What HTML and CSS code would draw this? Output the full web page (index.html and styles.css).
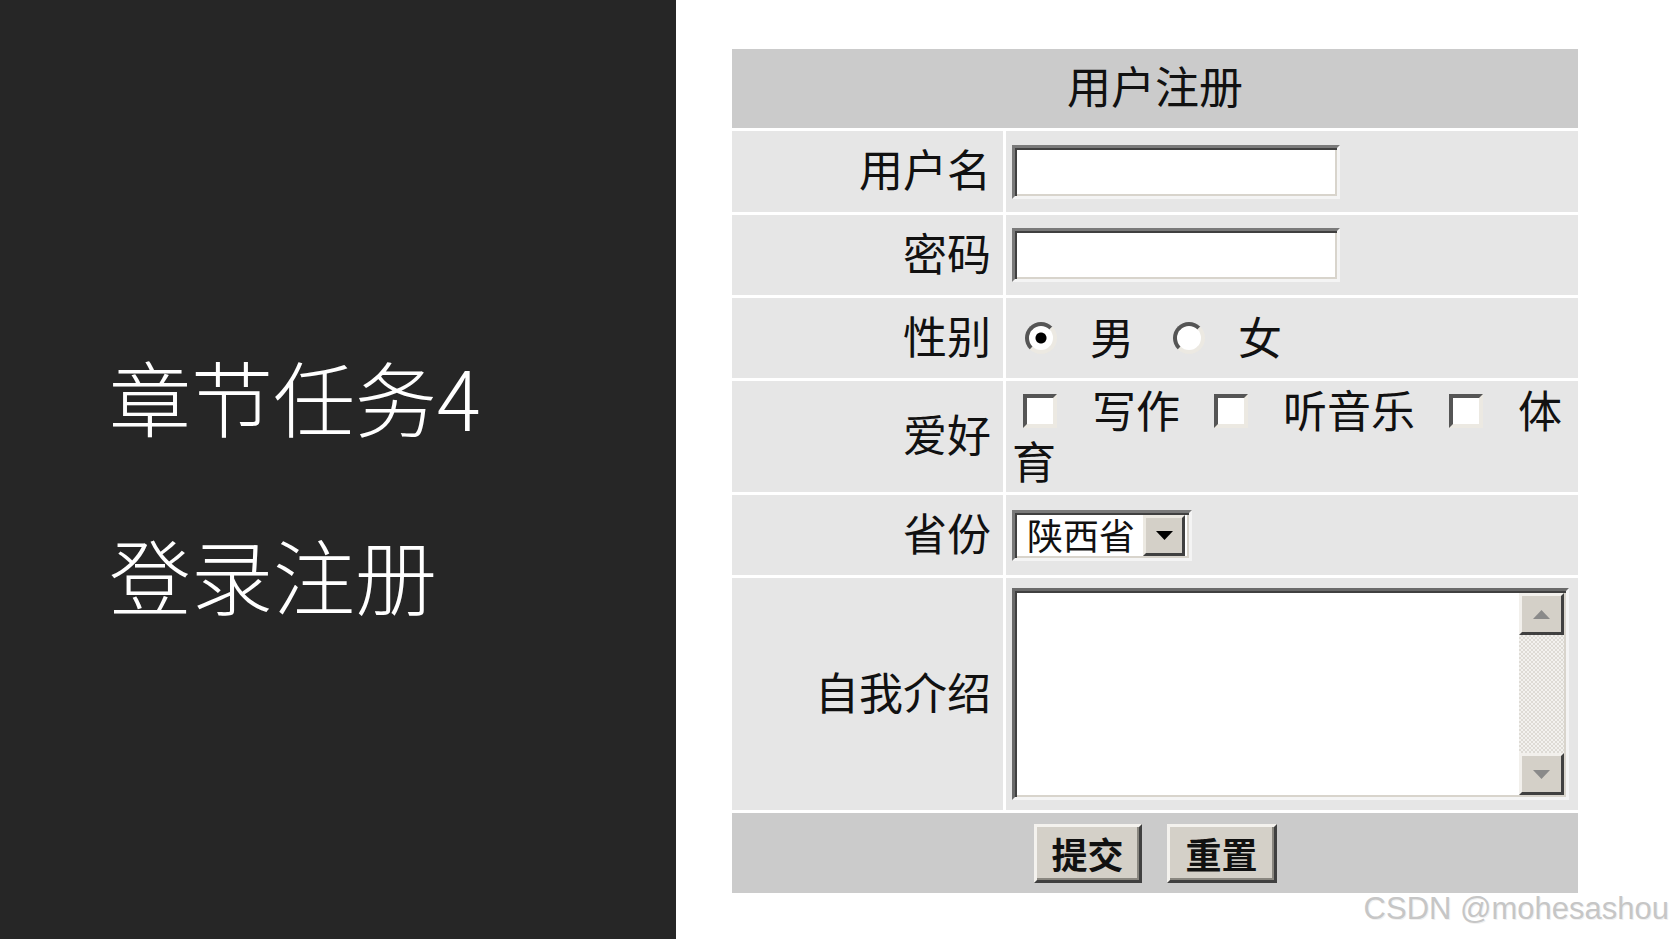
FILE: index.html
```html
<!DOCTYPE html>
<html lang="zh-CN">
<head>
  <meta charset="UTF-8">
  <title>章节任务4 登录注册</title>
  <link rel="stylesheet" href="styles.css">
</head>
<body>

<div class="slide">
  <div class="side">
    <h1>章节任务4</h1>
    <h1>登录注册</h1>
  </div>

  <div class="main">
    <form class="reg">
      <div class="head">用户注册</div>

      <label class="lbl" for="user">用户名</label>
      <div class="cell"><input type="text" id="user" class="text"></div>

      <label class="lbl" for="pwd">密码</label>
      <div class="cell"><input type="password" id="pwd" class="text"></div>

      <div class="lbl">性别</div>
      <div class="cell sex">
        <input type="radio" name="sex" class="radio" checked>
        <span class="opt">男</span>
        <input type="radio" name="sex" class="radio">
        <span class="opt">女</span>
      </div>

      <div class="lbl">爱好</div>
      <div class="cell">
        <div class="hobby"><input type="checkbox" class="check first">写作<input type="checkbox" class="check">听音乐<input type="checkbox" class="check">体育</div>
      </div>

      <div class="lbl">省份</div>
      <div class="cell">
        <div class="select">
          <span class="select-text">陕西省</span>
          <span class="select-btn">
            <svg width="17" height="9" viewBox="0 0 17 9"><path d="M0 0h17L8.5 9z" fill="#000"/></svg>
          </span>
        </div>
      </div>

      <label class="lbl" for="intro">自我介绍</label>
      <div class="cell">
        <div class="memo">
          <textarea id="intro"></textarea>
          <div class="scroll">
            <span class="scroll-btn">
              <svg width="17" height="9" viewBox="0 0 17 9"><path d="M8.5 0L17 9H0z" fill="#8a8a8a"/></svg>
            </span>
            <span class="scroll-track"></span>
            <span class="scroll-btn">
              <svg width="17" height="9" viewBox="0 0 17 9"><path d="M0 0h17L8.5 9z" fill="#8a8a8a"/></svg>
            </span>
          </div>
        </div>
      </div>

      <div class="foot">
        <button type="submit" class="btn">提交</button>
        <button type="reset" class="btn">重置</button>
      </div>
    </form>

    <div class="mark">CSDN @mohesashou</div>
  </div>
</div>

</body>
</html>
```

FILE: styles.css
```css
body {
  margin: 0;
  font-family: "Noto Sans CJK SC", sans-serif;
  color: #111;
}

.slide {
  display: flex;
  width: 1675px;
  height: 939px;
}

.side {
  width: 676px;
  box-sizing: border-box;
  padding: 355px 0 0 109px;
  background-color: #262626;
  color: #fff;
  display: flex;
  flex-direction: column;
  gap: 96px;
}

.side h1 {
  margin: 0;
  font-size: 82px;
  font-weight: 300;
  line-height: 82px;
}

.main {
  flex: 1;
  position: relative;
  background-color: #fff;
  padding: 49px 0 0 56px;
}

.reg {
  display: grid;
  grid-template-columns: 271px 572px;
  grid-template-rows: 79px 81px 80px 80px 111px 80px 232px 80px;
  gap: 3px;
  width: 846px;
  font-size: 44px;
  line-height: 51px;
}

.head, .foot {
  grid-column: 1 / 3;
  background-color: #cbcbcb;
  display: flex;
  align-items: center;
  justify-content: center;
}

.head {
  padding-bottom: 7px;
}

.foot {
  gap: 25px;
}

.lbl {
  background-color: #e6e6e6;
  display: flex;
  align-items: center;
  justify-content: flex-end;
  padding: 0 12px 6px 0;
}

.cell {
  background-color: #e6e6e6;
  display: flex;
  align-items: center;
  padding: 0 6px;
}

.text {
  width: 328px;
  height: 54px;
  box-sizing: border-box;
  margin: 0;
  border: 3px solid;
  border-color: #7a7a7a #f4f4f4 #f4f4f4 #7a7a7a;
  box-shadow: inset 2px 2px #404040, inset -2px -2px #d8d4cc;
  background-color: #fff;
  outline: none;
}

.radio {
  appearance: none;
  width: 32px;
  height: 32px;
  box-sizing: border-box;
  margin: 0;
  border: 4px solid;
  border-color: #555 #ece9e2 #ece9e2 #555;
  border-radius: 50%;
  background-color: #fff;
}

.radio:checked {
  background: radial-gradient(circle, #000 0 5px, #fff 6px);
}

.sex .radio:first-child {
  margin-left: 13px;
}

.opt {
  margin-left: 33px;
  padding-bottom: 4px;
}

.opt + .radio {
  margin-left: 39px;
}

.hobby {
  width: 100%;
  padding-bottom: 4px;
}

.check {
  appearance: none;
  width: 34px;
  height: 34px;
  box-sizing: border-box;
  margin: 0 35px 0 34px;
  border: 4px solid;
  border-color: #555 #ece9e2 #ece9e2 #555;
  background-color: #fff;
  vertical-align: 0;
}

.check.first {
  margin-left: 11px;
}

.select {
  display: flex;
  width: 180px;
  height: 51px;
  box-sizing: border-box;
  border: 3px solid;
  border-color: #7a7a7a #f4f4f4 #f4f4f4 #7a7a7a;
  box-shadow: inset 2px 2px #404040, inset -2px -2px #d8d4cc;
  background-color: #fff;
  padding: 2px 4px 2px 2px;
}

.select-text {
  flex: 1;
  padding-left: 10px;
  font-size: 36px;
  line-height: 38px;
}

.select-btn {
  width: 42px;
  box-sizing: border-box;
  border: 3px solid;
  border-color: #ece9e2 #404040 #404040 #ece9e2;
  background-color: #d4d0c8;
  display: flex;
  align-items: center;
  justify-content: center;
}

.memo {
  display: flex;
  width: 557px;
  height: 212px;
  box-sizing: border-box;
  border: 3px solid;
  border-color: #6a6a6a #f4f4f4 #f4f4f4 #6a6a6a;
  box-shadow: inset 2px 2px #404040, inset -2px -2px #d8d4cc;
  background-color: #fff;
  padding: 2px;
}

.memo textarea {
  flex: 1;
  border: none;
  outline: none;
  resize: none;
  background: transparent;
}

.scroll {
  width: 45px;
  display: flex;
  flex-direction: column;
}

.scroll-btn {
  height: 42px;
  box-sizing: border-box;
  border: 3px solid;
  border-color: #f2f0ec #404040 #404040 #f2f0ec;
  background-color: #d4d0c8;
  display: flex;
  align-items: center;
  justify-content: center;
}

.scroll-track {
  flex: 1;
  background: repeating-conic-gradient(#dedbd5 0 25%, #f3f2ef 0 50%) 0 0 / 4px 4px;
}

.btn {
  width: 108px;
  height: 59px;
  box-sizing: border-box;
  padding: 0 0 4px;
  border: 3px solid;
  border-color: #f4f2ee #404040 #404040 #f4f2ee;
  box-shadow: inset -2px -2px #8a8780;
  background-color: #d4d0c8;
  font-family: "Noto Sans CJK SC", sans-serif;
  font-size: 36px;
  font-weight: bold;
  color: #111;
  cursor: pointer;
}

.btn + .btn {
  width: 110px;
}

.mark {
  position: absolute;
  right: 6px;
  bottom: 15px;
  font-family: "Liberation Sans", Arial, sans-serif;
  font-size: 31px;
  line-height: 31px;
  color: #c6c6c6;
  text-shadow: 1px 1px 0 #f0f0f0;
}
```
